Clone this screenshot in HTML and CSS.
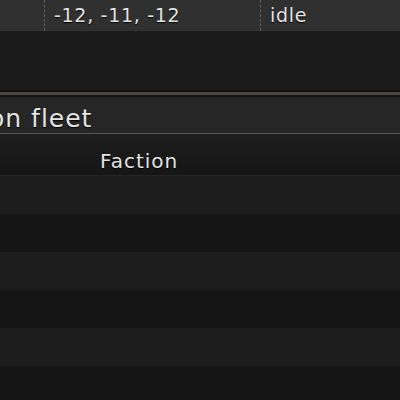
FILE: index.html
```html
<!DOCTYPE html>
<html>
<head>
<meta charset="utf-8">
<link rel="stylesheet" href="styles.css">
</head>
<body>
<div class="toprow">
  <div class="cell c1"></div>
  <div class="cell c2">-12, -11, -12</div>
  <div class="cell c3">idle</div>
</div>
<div class="gap"></div>
<div class="divider"></div>
<div class="panel">
  <div class="title"><span class="title-text">on fleet</span></div>
  <div class="header"><span class="hcell hc1"></span><span class="hcell">Faction</span></div>
  <div class="rows">
    <div class="row"></div>
    <div class="row alt"></div>
    <div class="row"></div>
    <div class="row alt"></div>
    <div class="row"></div>
    <div class="row alt"></div>
  </div>
</div>
</body>
</html>
```
FILE: styles.css
```css
html, body {
  margin: 0;
  padding: 0;
  background: #1c1c1c;
  font-family: "DejaVu Sans", sans-serif;
  color: #e4e4e4;
  overflow: hidden;
  width: 400px;
  height: 400px;
}
.toprow {
  display: flex;
  height: 31px;
  background: #303030;
  font-size: 19px;
  line-height: 31px;
  letter-spacing: 0.7px;
  text-shadow: 0 1px 1px #000;
}
.cell {
  padding-left: 9px;
  box-sizing: border-box;
  white-space: nowrap;
}
.c1 {
  width: 45px;
  border-right: 1px dashed #5e5e5e;
}
.c2 {
  width: 216px;
  border-right: 1px dashed #5e5e5e;
}
.c3 {
  flex: 1;
}
.gap {
  height: 59px;
  background: #1c1c1c;
}
.divider {
  height: 3px;
  background: #4a4441;
  border-top: 2px solid #111;
  border-bottom: 2px solid #151515;
}
.panel {
  background: #1a1a1a;
}
.title {
  height: 37px;
  box-sizing: border-box;
  padding-top: 6px;
  line-height: 31px;
  font-size: 25px;
  background: #262626;
  border-bottom: 1px solid #555;
  white-space: nowrap;
  overflow: hidden;
  letter-spacing: 1px;
  text-shadow: 0 1px 1px #000;
}
.title-text {
  display: inline-block;
  margin-left: -11px;
}
.header {
  display: flex;
  height: 42px;
  box-sizing: border-box;
  padding-top: 13px;
  line-height: 28px;
  font-size: 20px;
  letter-spacing: 1px;
  background: linear-gradient(#1e1e1e, #161616);
  border-bottom: 1px solid #262626;
  text-shadow: 0 1px 1px #000;
}
.hc1 {
  width: 100px;
}
.row {
  height: 38px;
  background: #1d1d1d;
}
.row.alt {
  background: #151515;
}
```
